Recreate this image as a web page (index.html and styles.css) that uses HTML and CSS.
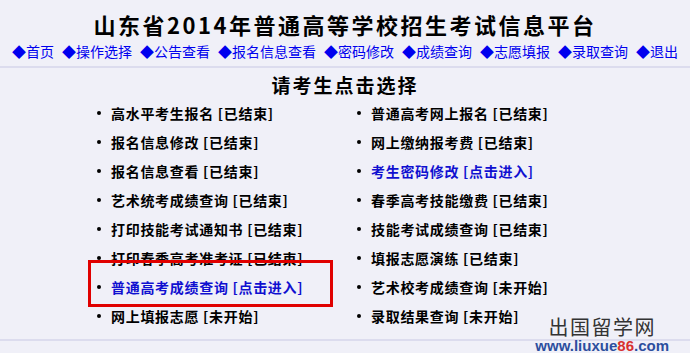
FILE: index.html
```html
<!DOCTYPE html>
<html lang="zh-CN">
<head>
<meta charset="utf-8">
<title>山东省2014年普通高等学校招生考试信息平台</title>
<link rel="stylesheet" href="styles.css">
</head>
<body>
<div class="page">
  <header class="header">
    <h1 class="title">山东省2014年普通高等学校招生考试信息平台</h1>
    <nav class="nav">
      <a href="#">◆首页</a>
      <a href="#">◆操作选择</a>
      <a href="#">◆公告查看</a>
      <a href="#">◆报名信息查看</a>
      <a href="#">◆密码修改</a>
      <a href="#">◆成绩查询</a>
      <a href="#">◆志愿填报</a>
      <a href="#">◆录取查询</a>
      <a href="#">◆退出</a>
    </nav>
  </header>
  <main class="main">
    <h2 class="subtitle">请考生点击选择</h2>
    <ul class="menu">
      <li>高水平考生报名 [已结束]</li>
      <li>普通高考网上报名 [已结束]</li>
      <li>报名信息修改 [已结束]</li>
      <li>网上缴纳报考费 [已结束]</li>
      <li>报名信息查看 [已结束]</li>
      <li class="active"><a href="#">考生密码修改 [点击进入]</a></li>
      <li>艺术统考成绩查询 [已结束]</li>
      <li>春季高考技能缴费 [已结束]</li>
      <li>打印技能考试通知书 [已结束]</li>
      <li>技能考试成绩查询 [已结束]</li>
      <li>打印春季高考准考证 [已结束]</li>
      <li>填报志愿演练 [已结束]</li>
      <li class="active"><a href="#">普通高考成绩查询 [点击进入]</a></li>
      <li>艺术校考成绩查询 [未开始]</li>
      <li>网上填报志愿 [未开始]</li>
      <li>录取结果查询 [未开始]</li>
    </ul>
  </main>
  <div class="highlight"></div>
  <div class="watermark">
    <div class="wm-cn">出国留学网</div>
    <div class="wm-url">www.liuxue<span class="wm-red">86</span>.com</div>
  </div>
</div>
</body>
</html>
```

FILE: styles.css
```css
html, body {
  margin: 0;
  padding: 0;
  background: #f0f0f8;
}
body {
  font-family: "Noto Sans CJK SC", "Noto Sans", sans-serif;
  width: 690px;
  height: 353px;
  overflow: hidden;
}
.page {
  position: relative;
  width: 690px;
  height: 353px;
}
.header {
  border-bottom: 2px solid #dcdcee;
  height: 66px;
  display: flex;
  flex-direction: column;
  align-items: center;
}
.title {
  margin: 10px 0 0 0;
  font-size: 22px;
  line-height: 28px;
  font-weight: bold;
  letter-spacing: 2.5px;
  color: #000;
}
.nav {
  margin-top: 3px;
  display: flex;
  gap: 8px;
  font-size: 14px;
  line-height: 20px;
}
.nav a {
  color: #0000ee;
  text-decoration: none;
}
.main {
  height: 271px;
  border-bottom: 2px solid #dcdcee;
  display: flex;
  flex-direction: column;
  align-items: center;
}
.subtitle {
  margin: 5px 0 0 0;
  font-size: 19px;
  line-height: 24px;
  font-weight: bold;
  letter-spacing: 2px;
  color: #000;
}
.menu {
  list-style: none;
  margin: 1px 0 0 0;
  padding: 0 0 0 97px;
  align-self: stretch;
  display: grid;
  grid-template-columns: 260px 260px;
  grid-auto-rows: 29px;
}
.menu li {
  display: flex;
  align-items: center;
  font-size: 14px;
  font-weight: bold;
  color: #000;
  letter-spacing: 0.7px;
}
.menu li::before {
  content: "";
  width: 4px;
  height: 4px;
  border-radius: 50%;
  background: #000;
  margin-right: 10px;
  flex: none;
}
.menu li a {
  color: #1010d0;
  text-decoration: none;
}
.highlight {
  position: absolute;
  left: 88px;
  top: 260px;
  width: 239px;
  height: 41px;
  border: 3px solid #e00000;
}
.watermark {
  position: absolute;
  right: 21px;
  bottom: 0;
  display: flex;
  flex-direction: column;
  align-items: center;
}
.wm-cn {
  font-family: "Noto Sans CJK SC", sans-serif;
  font-size: 20px;
  line-height: 22px;
  letter-spacing: 1.5px;
  color: #333;
}
.wm-url {
  font-family: "Liberation Sans", Arial, sans-serif;
  font-size: 15px;
  line-height: 15px;
  font-weight: bold;
  color: #2c4e9e;
}
.wm-red {
  color: #d83030;
}
```
